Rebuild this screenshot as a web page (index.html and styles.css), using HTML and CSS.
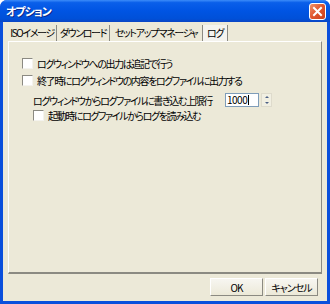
FILE: index.html
```html
<!DOCTYPE html>
<html lang="ja">
<head>
    <meta charset="UTF-8">
    <title>オプション</title>
    <link rel="stylesheet" href="styles.css">
</head>
<body>
    <div class="window">
        <div class="titlebar">
            <span class="title">オプション</span>
            <span class="close-btn">
                <svg width="11" height="11" viewBox="0 0 11 11">
                    <path d="M2 2 L9 9 M9 2 L2 9" stroke="#fff" stroke-width="2" stroke-linecap="square"/>
                </svg>
            </span>
        </div>
        <div class="client">
            <div class="tabs">
                <div class="tab tab-iso">ISOイメージ</div>
                <div class="tab tab-dl">ダウンロード</div>
                <div class="tab tab-setup">セットアップ&nbsp;マネージャ</div>
                <div class="tab tab-log active">ログ</div>
            </div>
            <div class="panel">
                <label class="check"><span class="box"></span>ログウィンドウへの出力は追記で行う</label>
                <label class="check"><span class="box"></span>終了時にログウィンドウの内容をログファイルに出力する</label>
                <div class="sub">
                    <div class="limit-row">
                        <span class="limit-label">ログウィンドウからログファイルに書き込む上限行</span>
                        <span class="spin-input">1000<span class="caret"></span></span>
                        <span class="spin">
                            <span class="arrow up"></span>
                            <span class="arrow down"></span>
                        </span>
                    </div>
                    <label class="check"><span class="box"></span>起動時にログファイルからログを読み込む</label>
                </div>
            </div>
            <div class="buttons">
                <button class="btn">OK</button>
                <button class="btn">キャンセル</button>
            </div>
        </div>
    </div>
</body>
</html>
```

FILE: styles.css
```css
/* XP style dialog */
body {
    margin: 0;
    background: #fff;
    font-family: "Noto Sans CJK JP", "Noto Sans", sans-serif;
    font-size: 10px;
    letter-spacing: -1.4px;
    font-feature-settings: "palt";
    color: #000;
}

.window {
    width: 330px;
    height: 304px;
    background: #0a4fdc;
    border-radius: 7px 7px 0 0;
    display: flex;
    flex-direction: column;
    box-sizing: border-box;
    padding: 0 3px 3px 3px;
}

.titlebar {
    height: 22px;
    margin: 0 -3px;
    padding: 0 4px 0 6px;
    display: flex;
    align-items: center;
    justify-content: space-between;
    border-radius: 7px 7px 0 0;
    background: linear-gradient(#3c8cf9 0%, #0a5fea 12%, #0054e3 50%, #0050d8 85%, #0a45c4 100%);
}

.title {
    color: #fff;
    font-weight: bold;
    font-size: 11px;
    letter-spacing: -1px;
    text-shadow: 1px 1px 0 #0a2a8a;
}

.close-btn {
    width: 17px;
    height: 17px;
    box-sizing: border-box;
    border: 1px solid #fff;
    border-radius: 3px;
    background: linear-gradient(135deg, #f0936c, #e0552c 50%, #c9401c);
    display: flex;
    align-items: center;
    justify-content: center;
}

.client {
    flex: 1;
    background: #ece9d8;
    display: flex;
    flex-direction: column;
    padding: 3px 5px 5px 5px;
}

.tabs {
    display: flex;
    height: 16px;
}

.tab {
    line-height: 16px;
    border-right: 1px solid #8b8a82;
    white-space: nowrap;
    text-align: center;
    box-sizing: border-box;
}

.tab-iso { width: 49px; }
.tab-dl { width: 53px; }
.tab-setup { width: 93px; }
.tab-log { width: 25px; }

.tab.active {
    background: #f4f3ee;
}

.panel {
    flex: 1;
    border-top: 1px solid #fff;
    border-left: 1px solid #fff;
    border-right: 1px solid #8b8a82;
    border-bottom: 2px solid #8b8a82;
    padding: 14px 10px 0 13px;
    display: flex;
    flex-direction: column;
    gap: 3px;
}

.check {
    display: flex;
    align-items: center;
    height: 14px;
}

.box {
    width: 9px;
    height: 9px;
    background: #fff;
    border-top: 1px solid #8b8a82;
    border-left: 1px solid #8b8a82;
    border-right: 1px solid #f4f3ee;
    border-bottom: 1px solid #f4f3ee;
    margin-right: 4px;
}

.sub {
    padding-left: 11px;
    margin-top: 2px;
    display: flex;
    flex-direction: column;
}

.limit-row {
    display: flex;
    align-items: center;
    height: 16px;
}

.limit-label {
    width: 192px;
    white-space: nowrap;
}

.spin-input {
    width: 31px;
    height: 12px;
    background: #fff;
    border: 1px solid #7f9db9;
    line-height: 12px;
    padding-left: 1px;
    display: flex;
    align-items: center;
    letter-spacing: -0.5px;
}

.caret {
    width: 1px;
    height: 10px;
    background: #000;
    margin-left: 1px;
}

.spin {
    margin-left: 2px;
    width: 11px;
    height: 14px;
    display: flex;
    flex-direction: column;
    justify-content: space-around;
    align-items: center;
    background: #f1efe2;
    border: 1px solid #dedbcc;
    box-sizing: border-box;
}

.arrow {
    width: 0;
    height: 0;
    border-left: 2px solid transparent;
    border-right: 2px solid transparent;
}

.arrow.up {
    border-bottom: 2px solid #4d6185;
}

.arrow.down {
    border-top: 2px solid #4d6185;
}

.buttons {
    display: flex;
    justify-content: flex-end;
    gap: 2px;
    padding-top: 4px;
    padding-right: 4px;
}

.btn {
    width: 53px;
    height: 18px;
    box-sizing: border-box;
    font-family: inherit;
    font-size: 10px;
    letter-spacing: -1px;
    font-feature-settings: "palt";
    background: linear-gradient(#f7f6f1, #ece9d8);
    border: 1px solid #fff;
    border-right-color: #8b8a82;
    border-bottom-color: #8b8a82;
    padding: 0;
    color: #000;
}
```
